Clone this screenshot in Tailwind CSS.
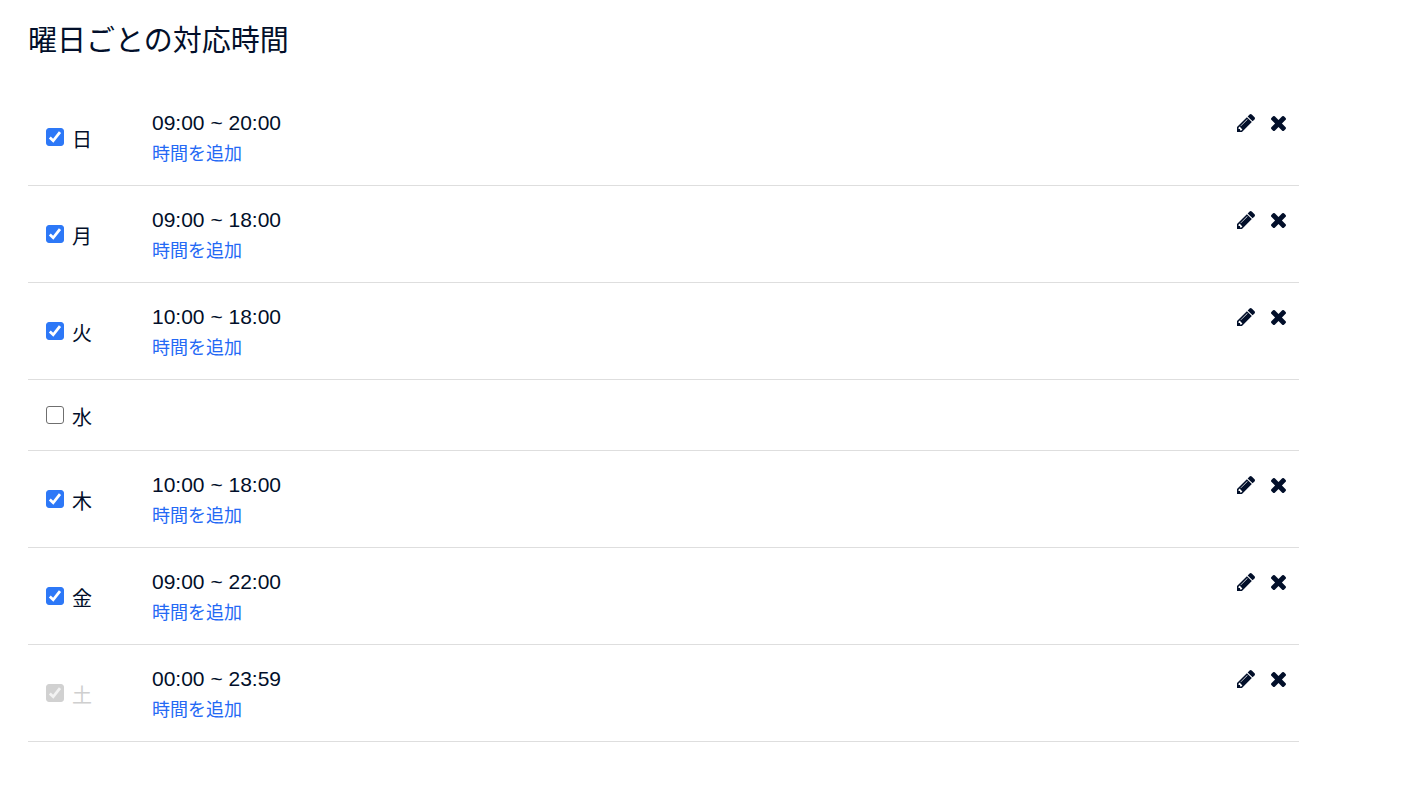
<!DOCTYPE html>
<html lang="ja">
<head>
    <meta charset="UTF-8">
    <meta name="viewport" content="width=device-width, initial-scale=1.0">
    <title>曜日ごとの対応時間</title>
    <script src="https://cdn.jsdelivr.net/npm/@tailwindcss/browser@4"></script>
</head>
<body class="bg-white text-[#020f2a] font-['Liberation_Sans','Noto_Sans_CJK_JP',sans-serif]">
    <!-- Shared icons -->
    <svg class="hidden">
        <symbol id="icon-check" viewBox="0 0 18 18">
            <path d="M3.8 9.6 7.2 12.8 14 4.2" fill="none" stroke="currentColor" stroke-width="2.8"/>
        </symbol>
        <symbol id="icon-pencil" viewBox="0 149 1515 1515">
            <path fill="currentColor" d="M363 1536l91-91-235-235-91 91v107h128v128h107zM886 608q0-22-22-22-10 0-17 7L305 1135q-7 7-7 17 0 22 22 22 10 0 17-7l542-542q7-7 7-17zM832 416l416 416-832 832H0v-416zM1515 512q0 53-37 90l-166 166L896 352l165-165q36-38 90-38 53 0 91 38l235 234q38 39 38 91z"/>
        </symbol>
        <symbol id="icon-times" viewBox="110 366 1188 1188">
            <path fill="currentColor" d="M1298 1322q0 40-28 68l-136 136q-28 28-68 28t-68-28l-294-294-294 294q-28 28-68 28t-68-28L138 1390q-28-28-28-68t28-68l294-294-294-294q-28-28-28-68t28-68l136-136q28-28 68-28t68 28l294 294 294-294q28-28 68-28t68 28l136 136q28 28 28 68t-28 68L976 960l294 294q28 28 28 68z"/>
        </symbol>
    </svg>

    <main class="pl-7 pr-[107px] pt-[21px]">
        <h1 class="text-[29px] leading-10">曜日ごとの対応時間</h1>
        <table class="mt-7 w-full border-separate border-spacing-0">
            <tbody id="days"></tbody>
        </table>
    </main>

    <script>
        const days = [
            { id: 'sun', name: '日', time: '09:00 ~ 20:00' },
            { id: 'mon', name: '月', time: '09:00 ~ 18:00' },
            { id: 'tue', name: '火', time: '10:00 ~ 18:00' },
            { id: 'wed', name: '水', time: '' },
            { id: 'thu', name: '木', time: '10:00 ~ 18:00' },
            { id: 'fri', name: '金', time: '09:00 ~ 22:00' },
            { id: 'sat', name: '土', time: '00:00 ~ 23:59', disabled: true },
        ];

        function hours(day) {
            if (!day.time) return '';
            return `
                <div class="text-[21px] leading-8">${day.time}</div>
                <a href="#" class="block w-fit text-lg leading-[30px] text-[#2469f5]">時間を追加</a>`;
        }

        function actions(day) {
            if (!day.time) return '';
            return `
                <div class="flex h-8 items-center justify-end gap-4">
                    <button type="button" aria-label="編集"><svg class="size-[18px]"><use href="#icon-pencil"/></svg></button>
                    <button type="button" aria-label="削除"><svg class="size-[15px]"><use href="#icon-times"/></svg></button>
                </div>`;
        }

        document.getElementById('days').innerHTML = days.map(day => `
            <tr class="${day.time ? 'h-[97px]' : 'h-[71px]'}">
                <td class="w-[124px] border-b border-[#dedede] pl-[18px] align-middle">
                    <div class="flex items-center gap-2">
                        <span class="grid size-[18px] shrink-0">
                            <input type="checkbox" id="${day.id}" ${day.time ? 'checked' : ''} ${day.disabled ? 'disabled' : ''}
                                class="peer col-start-1 row-start-1 size-[18px] appearance-none rounded-[3px] border border-[#6f6f6f] bg-white checked:border-[#2d78f7] checked:bg-[#2d78f7] disabled:border-[#d1d1d1] disabled:bg-[#d1d1d1]">
                            <svg class="pointer-events-none invisible col-start-1 row-start-1 size-[18px] text-white peer-checked:visible peer-disabled:text-[#f2f2f2]"><use href="#icon-check"/></svg>
                        </span>
                        <label for="${day.id}" class="pt-1.5 text-xl leading-7 ${day.disabled ? 'text-[#cfcfcf]' : ''}">${day.name}</label>
                    </div>
                </td>
                <td class="border-b border-[#dedede] pt-[18px] align-top">${hours(day)}</td>
                <td class="border-b border-[#dedede] pt-[18px] pr-[13px] align-top">${actions(day)}</td>
            </tr>`).join('');
    </script>
</body>
</html>
